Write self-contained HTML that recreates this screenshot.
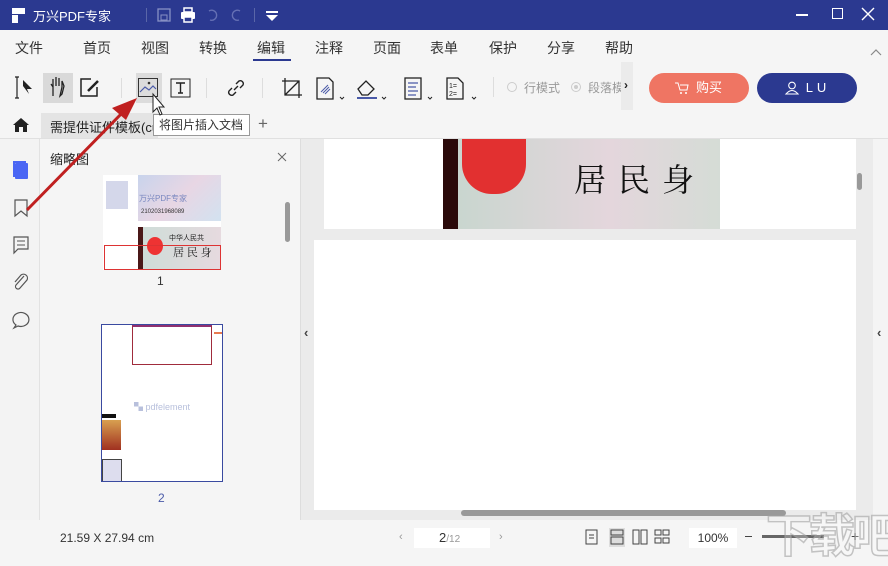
<!DOCTYPE html>
<html><head><meta charset="utf-8"><style>
*{margin:0;padding:0;box-sizing:border-box}
body{width:888px;height:550px;overflow:hidden;background:#f5f5f5;font-family:"Liberation Sans","Noto Sans CJK SC",sans-serif;position:relative;color:#333}
.a{position:absolute}
.title{left:0;top:0;width:888px;height:30px;background:#2b3990;color:#fff}
.menu span{position:absolute;top:38px;font-size:14px;color:#333}
.btn{border-radius:15px;color:#fff;font-size:13px;text-align:center;line-height:30px}
svg{position:absolute;overflow:visible}
</style></head><body>
<div class="a title">
 <div class="a" style="left:12px;top:8px;width:13px;height:6px;background:#fff"></div>
 <div class="a" style="left:12px;top:15px;width:6px;height:8px;background:#fff"></div>
 <div class="a" style="left:33px;top:6px;font-size:13px">万兴PDF专家</div>
 <div class="a" style="left:146px;top:8px;width:1px;height:14px;background:#5a66a8"></div>
 <svg style="left:157px;top:8px" width="14" height="14"><rect x="1" y="1" width="12" height="12" fill="none" stroke="#8790c4" stroke-width="1.3"/><rect x="4" y="7" width="6" height="5" fill="none" stroke="#8790c4"/></svg>
 <svg style="left:180px;top:7px" width="16" height="16"><rect x="4" y="1" width="8" height="4" fill="none" stroke="#fff" stroke-width="1.5"/><rect x="1" y="5" width="14" height="7" rx="1" fill="#fff"/><rect x="4" y="10" width="8" height="5" fill="#2b3990" stroke="#fff" stroke-width="1.5"/></svg>
 <svg style="left:206px;top:8px" width="14" height="14"><path d="M3 3 A5 5 0 1 1 4 12" fill="none" stroke="#6570b4" stroke-width="1.4"/></svg>
 <svg style="left:229px;top:8px" width="14" height="14"><path d="M11 3 A5 5 0 1 0 10 12" fill="none" stroke="#6570b4" stroke-width="1.4"/></svg>
 <div class="a" style="left:254px;top:8px;width:1px;height:14px;background:#5a66a8"></div>
 <svg style="left:266px;top:11px" width="12" height="10"><rect x="0" y="0" width="12" height="2" fill="#fff"/><path d="M0 4 H12 L6 10Z" fill="#fff"/></svg>
 <div class="a" style="left:796px;top:14px;width:12px;height:1.5px;background:#fff"></div>
 <div class="a" style="left:832px;top:8px;width:11px;height:11px;border:1.5px solid #fff"></div>
 <svg style="left:862px;top:8px" width="12" height="12"><path d="M0 0L12 12M12 0L0 12" stroke="#fff" stroke-width="1.4"/></svg>
</div>
<div class="menu">
<span style="left:15px">文件</span><span style="left:83px">首页</span><span style="left:141px">视图</span><span style="left:199px">转换</span><span style="left:257px">编辑</span><span style="left:315px">注释</span><span style="left:373px">页面</span><span style="left:430px">表单</span><span style="left:489px">保护</span><span style="left:547px">分享</span><span style="left:605px">帮助</span>
</div>
<div class="a" style="left:253px;top:59px;width:38px;height:2px;background:#2b3990"></div>
<svg style="left:871px;top:49px" width="10" height="6"><path d="M0 6L5 1L10 6" fill="none" stroke="#888" stroke-width="1.2"/></svg>
<div class="a" style="left:43px;top:73px;width:30px;height:30px;background:#d9d9d9"></div>
<div class="a" style="left:136px;top:73px;width:26px;height:30px;background:#dcdcdc"></div>
<svg style="left:16px;top:77px" width="22" height="22"><path d="M1 0V21M-1 0H3M-1 21H3" stroke="#222" stroke-width="1.2"/><path d="M7 3L16 12L11 12L13 17L7 9Z" fill="#222"/></svg>
<svg style="left:48px;top:76px" width="20" height="22"><path d="M5 20V11L3 8M5 11V3M8 10V1M11 10V2M14 11V5L16 10L14 18L12 20Z" fill="none" stroke="#222" stroke-width="1.3"/></svg>
<svg style="left:80px;top:78px" width="20" height="20"><path d="M11 1H1V18H17V9" fill="none" stroke="#222" stroke-width="1.5"/><path d="M8 13L18 3" stroke="#222" stroke-width="2.5"/></svg>
<div class="a" style="left:121px;top:78px;width:1px;height:20px;background:#ddd"></div>
<svg style="left:138px;top:78px" width="20" height="20"><rect x="0.5" y="0.5" width="19" height="18" fill="none" stroke="#333"/><path d="M2 14L7 9L11 12L15 8L18 11" fill="none" stroke="#4a5aa8" stroke-width="1.2"/><circle cx="11" cy="5" r="1.3" fill="#333"/></svg>
<svg style="left:170px;top:78px" width="22" height="20"><rect x="1" y="1" width="19" height="18" fill="none" stroke="#222"/><path d="M6 5H15M10.5 5V15M8 15H13" stroke="#222" stroke-width="1.4"/></svg>
<div class="a" style="left:206px;top:78px;width:1px;height:20px;background:#ddd"></div>
<svg style="left:226px;top:78px" width="20" height="20"><path d="M8 12L12 8M6 10L3 13A3 3 0 0 0 7 17L10 14M14 10L17 7A3 3 0 0 0 13 3L10 6" fill="none" stroke="#222" stroke-width="1.4"/></svg>
<div class="a" style="left:262px;top:78px;width:1px;height:20px;background:#ddd"></div>
<svg style="left:282px;top:78px" width="20" height="20"><path d="M3 0V17H20M0 3H17V20M3 17L17 3" fill="none" stroke="#222" stroke-width="1.3"/></svg>
<svg style="left:316px;top:77px" width="30" height="24"><path d="M1 1H13L17 5V22H1Z" fill="none" stroke="#222" stroke-width="1.3"/><path d="M5 15L12 8M7 16L13 10M9 17L14 12" stroke="#4a5aa8"/><path d="M24 20L26 22L28 20" fill="none" stroke="#222"/></svg>
<svg style="left:357px;top:78px" width="32" height="24"><path d="M1 11L9 3L17 11L11 17H5Z" fill="none" stroke="#222" stroke-width="1.3"/><path d="M0 20H20" stroke="#4a5aa8" stroke-width="2"/><path d="M25 19L27 21L29 19" fill="none" stroke="#222"/></svg>
<svg style="left:404px;top:77px" width="32" height="24"><rect x="1" y="1" width="16" height="21" fill="none" stroke="#222" stroke-width="1.3"/><path d="M4 6H14M4 10H12M4 14H14M4 18H12" stroke="#4a5aa8" stroke-width="1.3"/><path d="M24 20L26 22L28 20" fill="none" stroke="#222"/></svg>
<svg style="left:446px;top:77px" width="32" height="24"><path d="M1 1H12L17 6V22H1Z" fill="none" stroke="#222" stroke-width="1.3"/><text x="3" y="11" font-size="7" fill="#222" font-family="Liberation Sans">1=</text><text x="3" y="19" font-size="7" fill="#222" font-family="Liberation Sans">2=</text><path d="M26 20L28 22L30 20" fill="none" stroke="#222"/></svg>
<div class="a" style="left:493px;top:77px;width:1px;height:20px;background:#ddd"></div>
<div class="a" style="left:507px;top:82px;width:10px;height:10px;border:1px solid #ccc;border-radius:50%"></div>
<div class="a" style="left:524px;top:79px;font-size:12px;color:#999">行模式</div>
<div class="a" style="left:571px;top:82px;width:10px;height:10px;border:1px solid #ccc;border-radius:50%"><div class="a" style="left:2px;top:2px;width:4px;height:4px;background:#ccc;border-radius:50%"></div></div>
<div class="a" style="left:588px;top:79px;font-size:12px;color:#999;width:34px;overflow:hidden;white-space:nowrap">段落模式</div>
<div class="a" style="left:621px;top:62px;width:12px;height:48px;background:#ebebeb"></div>
<div class="a" style="left:624px;top:78px;font-size:12px;font-weight:bold;color:#222">›</div>
<div class="a btn" style="left:649px;top:73px;width:100px;background:#ef7563">
<svg style="left:26px;top:9px" width="14" height="12"><path d="M0 1H3L5 8H12L13 3H5" fill="none" stroke="#fff" stroke-width="1"/><circle cx="6" cy="11" r="1" fill="#fff"/><circle cx="11" cy="11" r="1" fill="#fff"/></svg><span style="margin-left:20px">购买</span></div>
<div class="a btn" style="left:757px;top:73px;width:100px;background:#2b3990">
<svg style="left:28px;top:8px" width="14" height="14"><circle cx="7" cy="4.5" r="3.3" fill="none" stroke="#fff" stroke-width="1.1"/><path d="M1 13Q7 6 13 13Z" fill="none" stroke="#fff" stroke-width="1.1"/></svg><span style="margin-left:22px;letter-spacing:4px">LU</span></div>
<div class="a" style="left:0;top:138px;width:888px;height:1px;background:#e0e0e0"></div>
<svg style="left:12px;top:117px" width="18" height="16"><path d="M9 1L1 8H3V15H7V10H11V15H15V8H17Z" fill="#222"/></svg>
<div class="a" style="left:41px;top:113px;width:117px;height:25px;background:#e4e4e4"></div>
<div class="a" style="left:50px;top:117px;font-size:13px;color:#222;white-space:nowrap">需提供证件模板(cut</div>
<div class="a" style="left:258px;top:114px;font-size:17px;color:#666">+</div>
<div class="a" style="left:153px;top:114px;width:97px;height:22px;background:#fff;border:1px solid #999;font-size:12px;color:#333;line-height:20px;padding-left:5px;white-space:nowrap">将图片插入文档</div>
<div class="a" style="left:0;top:139px;width:40px;height:381px;background:#f3f3f3;border-right:1px solid #e2e2e2"></div>
<div class="a" style="left:13px;top:161px;width:13px;height:16px;border-left:2px solid #4a66f4;border-top:2px solid #4a66f4"></div>
<div class="a" style="left:15px;top:163px;width:13px;height:16px;background:#4a66f4;border-radius:1px"></div>
<svg style="left:14px;top:199px" width="14" height="18"><path d="M1 1H13V17L7 12L1 17Z" fill="none" stroke="#555" stroke-width="1.2"/></svg>
<svg style="left:13px;top:236px" width="16" height="18"><path d="M1 1H15V13H5L1 17Z" fill="none" stroke="#555" stroke-width="1.2"/><path d="M4 5H12M4 9H12" stroke="#555"/></svg>
<svg style="left:12px;top:272px" width="18" height="20"><path d="M12 4L4 13A2.5 2.5 0 0 0 8 16L15 8A4 4 0 0 0 9 3L3 10" fill="none" stroke="#555" stroke-width="1.2"/></svg>
<svg style="left:12px;top:310px" width="18" height="18"><path d="M4 15A8 7 0 1 1 6 16L2 18Z" fill="none" stroke="#555" stroke-width="1.2"/></svg>
<div class="a" style="left:50px;top:149px;font-size:13px;color:#222">缩略图</div>
<svg style="left:278px;top:153px" width="8" height="8"><path d="M0 0L8 8M8 0L0 8" stroke="#666"/></svg>
<div class="a" style="left:300px;top:139px;width:1px;height:381px;background:#ddd"></div>
<div class="a" style="left:285px;top:202px;width:5px;height:40px;background:#999;border-radius:3px"></div>
<div class="a" style="left:103px;top:175px;width:118px;height:95px;background:#fff;overflow:hidden">
 <div class="a" style="left:35px;top:0;width:83px;height:46px;background:linear-gradient(135deg,#c8d4ec,#e8d6e4,#d2e2f0)"></div>
 <div class="a" style="left:3px;top:6px;width:22px;height:28px;background:#c9cde5;opacity:.8"></div>
 <div class="a" style="left:36px;top:18px;font-size:8px;color:#7a88c0">万兴PDF专家</div>
 <div class="a" style="left:38px;top:34px;font-size:6px;color:#333">2102031968089</div>
 <div class="a" style="left:35px;top:52px;width:83px;height:43px;background:linear-gradient(90deg,#4a1818 0 5px,#cfdcd8 5px,#e6dadf)"></div>
 <div class="a" style="left:44px;top:62px;width:16px;height:18px;background:#e33;border-radius:50%"></div>
 <div class="a" style="left:66px;top:58px;font-size:7px;color:#222">中华人民共</div>
 <div class="a" style="left:70px;top:69px;font-size:11px;color:#222;font-family:'Noto Serif CJK SC',serif">居 民 身</div>
 <div class="a" style="left:1px;top:70px;width:117px;height:25px;border:1px solid #d33"></div>
</div>
<div class="a" style="left:157px;top:274px;font-size:12px">1</div>
<div class="a" style="left:101px;top:324px;width:122px;height:158px;background:#fff;border:1px solid #3a4aa0;overflow:hidden">
 <div class="a" style="left:30px;top:0;width:80px;height:40px;border:1px solid #a02c3c;border-top:2px solid #903070"></div>
 <div class="a" style="left:112px;top:7px;width:8px;height:2px;background:#e87a50"></div>
 <div class="a" style="left:32px;top:75px;font-size:9px;color:#b8c0dc">▚ pdfelement</div>
 <div class="a" style="left:0;top:89px;width:14px;height:4px;background:#111"></div>
 <div class="a" style="left:0;top:95px;width:19px;height:30px;background:linear-gradient(#d8a050,#a03020)"></div>
 <div class="a" style="left:0;top:134px;width:20px;height:24px;border:1px solid #444;background:#dde"></div>
</div>
<div class="a" style="left:158px;top:491px;font-size:12px;color:#4a5aa8">2</div>
<div class="a" style="left:301px;top:139px;width:572px;height:381px;background:#ebebeb"></div>
<div class="a" style="left:873px;top:139px;width:15px;height:381px;background:#f4f4f4"></div>
<div class="a" style="left:324px;top:139px;width:532px;height:90px;background:#fff"></div>
<div class="a" style="left:443px;top:139px;width:277px;height:90px;background:linear-gradient(90deg,#2a0a0a 0 15px,#c9d6cf 15px,#e4d6dc 60%,#d5dcd6)"></div>
<div class="a" style="left:462px;top:139px;width:64px;height:55px;background:#e23030;border-radius:0 0 30px 30px"></div>
<div class="a" style="left:574px;top:155px;font-size:32px;color:#111;font-family:'Noto Serif CJK SC',serif;letter-spacing:12px;white-space:nowrap">居民身</div>
<div class="a" style="left:857px;top:173px;width:5px;height:17px;background:#999;border-radius:3px"></div>
<div class="a" style="left:314px;top:240px;width:542px;height:270px;background:#fff"></div>
<div class="a" style="left:304px;top:325px;font-size:13px;font-weight:bold;color:#444">‹</div>
<div class="a" style="left:877px;top:325px;font-size:13px;font-weight:bold;color:#444">‹</div>
<div class="a" style="left:461px;top:510px;width:325px;height:6px;background:#999;border-radius:3px"></div>
<div class="a" style="left:60px;top:531px;font-size:12px;color:#333">21.59 X 27.94 cm</div>
<div class="a" style="left:399px;top:531px;font-size:11px;color:#999">‹</div>
<div class="a" style="left:414px;top:528px;width:76px;height:20px;background:#fff"></div>
<div class="a" style="left:439px;top:530px;font-size:13px;color:#333">2<span style="font-size:10px;color:#999">/12</span></div>
<div class="a" style="left:499px;top:531px;font-size:11px;color:#999">›</div>
<svg style="left:585px;top:529px" width="100" height="18"><rect x="1" y="1" width="11" height="14" fill="none" stroke="#444"/><path d="M4 6H9M4 9H9" stroke="#444"/><rect x="24" y="-1" width="16" height="19" fill="#ddd"/><rect x="26" y="1" width="12" height="5" fill="none" stroke="#444"/><rect x="26" y="8" width="12" height="7" fill="none" stroke="#444"/><rect x="48" y="1" width="6" height="14" fill="none" stroke="#444"/><rect x="56" y="1" width="6" height="14" fill="none" stroke="#444"/><rect x="70" y="1" width="6" height="5" fill="none" stroke="#444"/><rect x="78" y="1" width="6" height="5" fill="none" stroke="#444"/><rect x="70" y="9" width="6" height="5" fill="none" stroke="#444"/><rect x="78" y="9" width="6" height="5" fill="none" stroke="#444"/></svg>
<div class="a" style="left:689px;top:528px;width:48px;height:20px;background:#fff;font-size:12px;line-height:20px;text-align:center">100%</div>
<div class="a" style="left:745px;top:536px;width:7px;height:1px;background:#444"></div>
<div class="a" style="left:762px;top:535px;width:62px;height:3px;background:#666"></div>
<div class="a" style="left:851px;top:528px;font-size:14px;color:#444">+</div>
<div class="a" style="left:766px;top:500px;font-size:46px;font-weight:bold;color:rgba(255,255,255,.25);-webkit-text-stroke:1.5px rgba(160,160,160,.6);letter-spacing:-3px;white-space:nowrap">下载吧</div>
<svg style="left:0;top:0" width="888" height="550"><path d="M27 210L125 110" stroke="#c02020" stroke-width="3"/><path d="M137 98L112 108L126 120Z" fill="#c02020"/><path d="M153 94V112L157 108L160 115L162 114L159 107H164Z" fill="#fff" stroke="#222" stroke-width="1"/></svg>
</body></html>
